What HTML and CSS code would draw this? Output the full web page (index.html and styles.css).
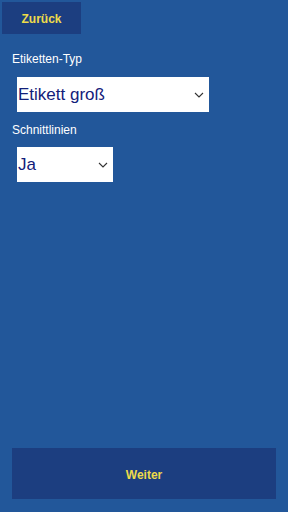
FILE: index.html
```html
<!DOCTYPE html>
<html lang="de">
<head>
<meta charset="UTF-8">
<meta name="viewport" content="width=device-width, initial-scale=1.0">
<title>Etiketten</title>
<link rel="stylesheet" href="styles.css">
</head>
<body>
    <div class="page">
        <div class="top">
            <button class="btn back">Zurück</button>
        </div>
        <div class="form">
            <div class="label first">Etiketten-Typ</div>
            <div class="select wide">
                <span>Etikett groß</span>
                <svg width="10" height="6" viewBox="0 0 10 6"><path d="M1 1 L5 5 L9 1" fill="none" stroke="#333" stroke-width="1.1"/></svg>
            </div>
            <div class="label second">Schnittlinien</div>
            <div class="select narrow">
                <span>Ja</span>
                <svg width="10" height="6" viewBox="0 0 10 6"><path d="M1 1 L5 5 L9 1" fill="none" stroke="#333" stroke-width="1.1"/></svg>
            </div>
        </div>
        <button class="btn next">Weiter</button>
    </div>
</body>
</html>
```

FILE: styles.css
```css
body {
    margin: 0;
    padding: 0;
    font-family: "Liberation Sans", Arial, sans-serif;
    background-color: #22579a;
}
.page {
    height: 512px;
    display: flex;
    flex-direction: column;
    box-sizing: border-box;
}
.top {
    padding: 2px;
}
.btn {
    background-color: #1c3e80;
    color: #eedb4a;
    border: none;
    font-family: "Liberation Sans", Arial, sans-serif;
    font-weight: bold;
    font-size: 12px;
    padding: 0;
}
.back {
    width: 79px;
    height: 32px;
    padding-top: 2px;
}
.form {
    padding: 0 12px;
}
.label {
    color: #fff;
    font-size: 12px;
    height: 14px;
}
.label.first {
    margin-top: 16px;
}
.label.second {
    margin-top: 11px;
}
.select {
    background-color: #fff;
    height: 35px;
    margin-left: 5px;
    display: flex;
    align-items: center;
    justify-content: space-between;
    padding: 0 5px 0 1px;
    box-sizing: border-box;
    color: #12207a;
    font-size: 17px;
}
.wide {
    width: 192px;
    margin-top: 11px;
}
.narrow {
    width: 96px;
    margin-top: 10px;
}
.next {
    margin: auto 12px 13px;
    height: 51px;
    padding-top: 2px;
}
```
